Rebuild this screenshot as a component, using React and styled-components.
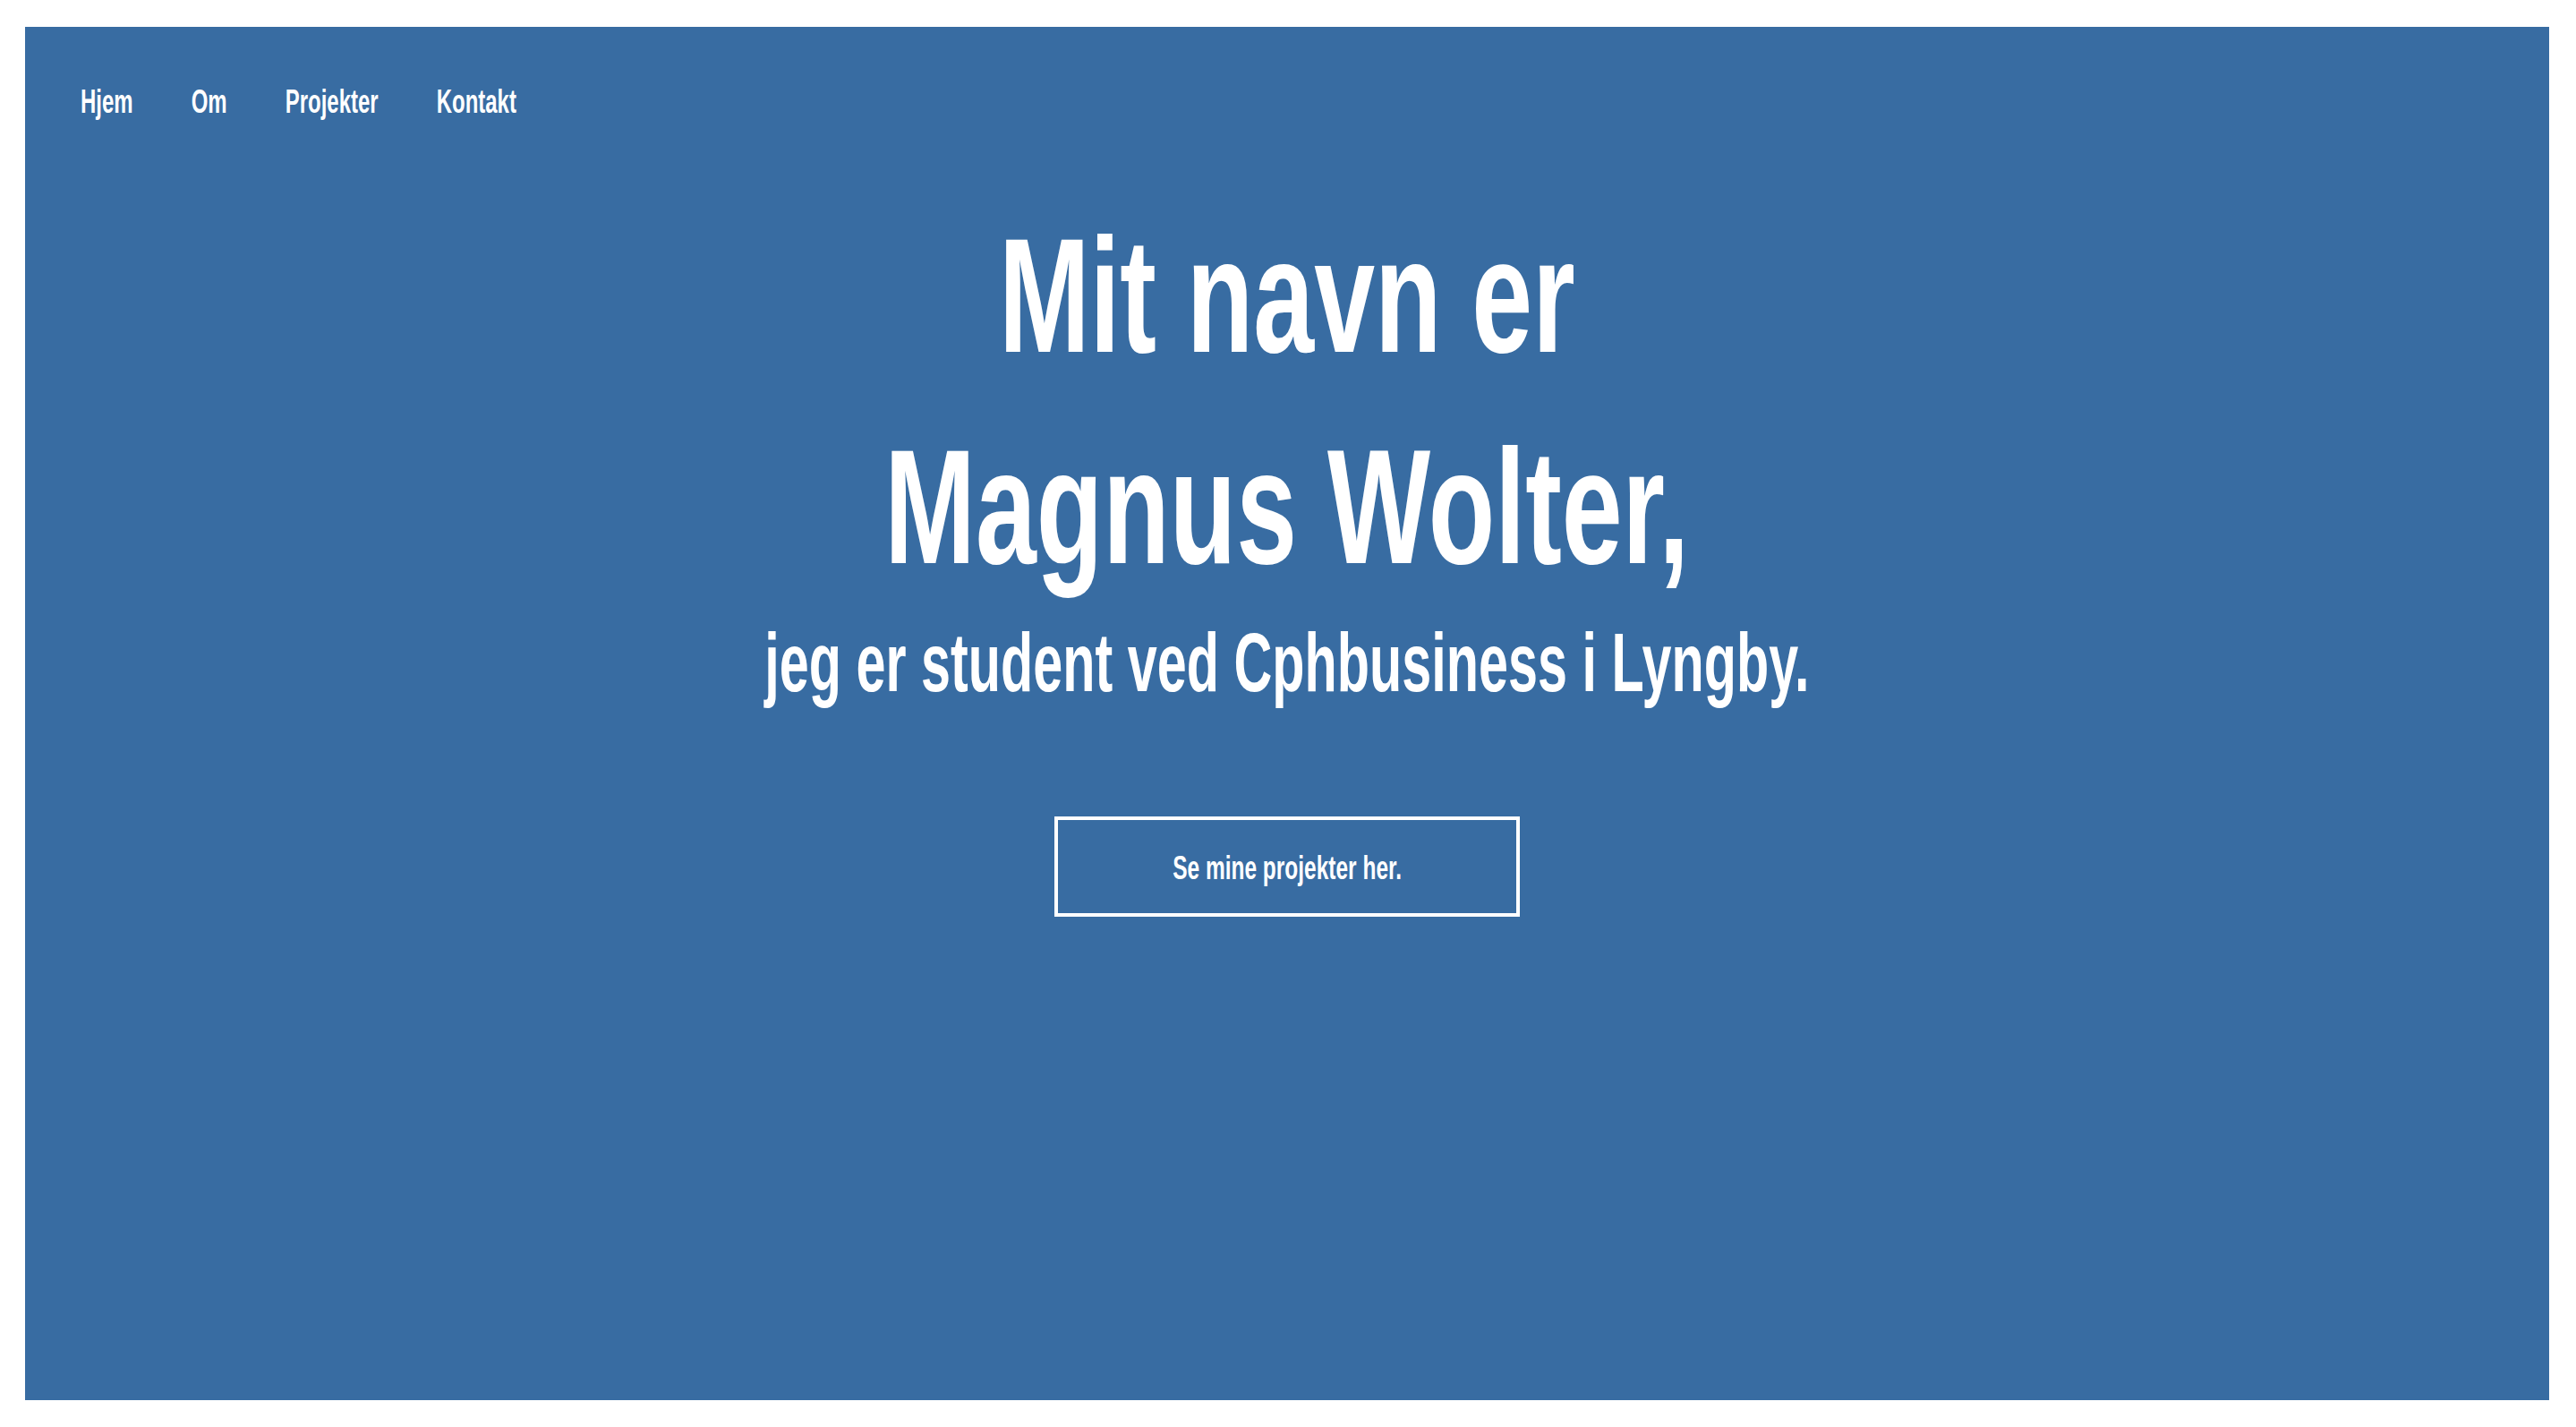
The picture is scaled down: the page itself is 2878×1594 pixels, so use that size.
import React from "react";
import styled, { createGlobalStyle } from "styled-components";

const GlobalStyle = createGlobalStyle`
  html, body {
    margin: 0;
    padding: 0;
    background: #ffffff;
  }
  body {
    font-family: "Liberation Sans", Arial, sans-serif;
  }
  * { box-sizing: border-box; }
`;

const Page = styled.div`
  height: 100vh;
  padding: 30px 30px 30px 28px;
  display: flex;
`;

const Panel = styled.main`
  flex: 1;
  background: #386ca2;
  color: #ffffff;
  display: flex;
  flex-direction: column;
  overflow: hidden;
`;

const NavBar = styled.nav`
  padding: 66px 0 0 62px;
`;

const NavList = styled.div`
  display: flex;
  gap: 98px;
  width: max-content;
  transform: scaleX(0.665);
  transform-origin: left top;
`;

const NavLink = styled.a`
  font-size: 36px;
  line-height: 1;
  font-weight: 700;
  color: #ffffff;
  text-decoration: none;
  white-space: nowrap;
`;

const Hero = styled.section`
  margin-top: 80px;
  display: flex;
  flex-direction: column;
  align-items: center;
`;

const Heading = styled.h1`
  margin: 0;
  font-size: 182px;
  line-height: 236px;
  font-weight: 700;
  text-align: center;
  white-space: nowrap;
  transform: scaleX(0.67);
`;

const Subtitle = styled.p`
  margin: 10px 0 0;
  font-size: 92px;
  line-height: 1;
  font-weight: 700;
  white-space: nowrap;
  transform: scaleX(0.645);
`;

const Button = styled.button`
  margin-top: 126px;
  width: 520px;
  height: 112px;
  padding: 3px 0 0;
  border: 4px solid #ffffff;
  background: transparent;
  color: #ffffff;
  display: flex;
  align-items: center;
  justify-content: center;
  cursor: pointer;
  font-family: inherit;
`;

const ButtonLabel = styled.span`
  display: inline-block;
  font-size: 36px;
  line-height: 1;
  font-weight: 700;
  white-space: nowrap;
  transform: scaleX(0.68);
`;

const links = ["Hjem", "Om", "Projekter", "Kontakt"];

export default function App() {
  return (
    <>
      <GlobalStyle />
      <Page>
        <Panel>
          <NavBar>
            <NavList>
              {links.map((l) => (
                <NavLink key={l} href="#">
                  {l}
                </NavLink>
              ))}
            </NavList>
          </NavBar>
          <Hero>
            <Heading>
              Mit navn er
              <br />
              Magnus Wolter,
            </Heading>
            <Subtitle>jeg er student ved Cphbusiness i Lyngby.</Subtitle>
            <Button>
              <ButtonLabel>Se mine projekter her.</ButtonLabel>
            </Button>
          </Hero>
        </Panel>
      </Page>
    </>
  );
}
